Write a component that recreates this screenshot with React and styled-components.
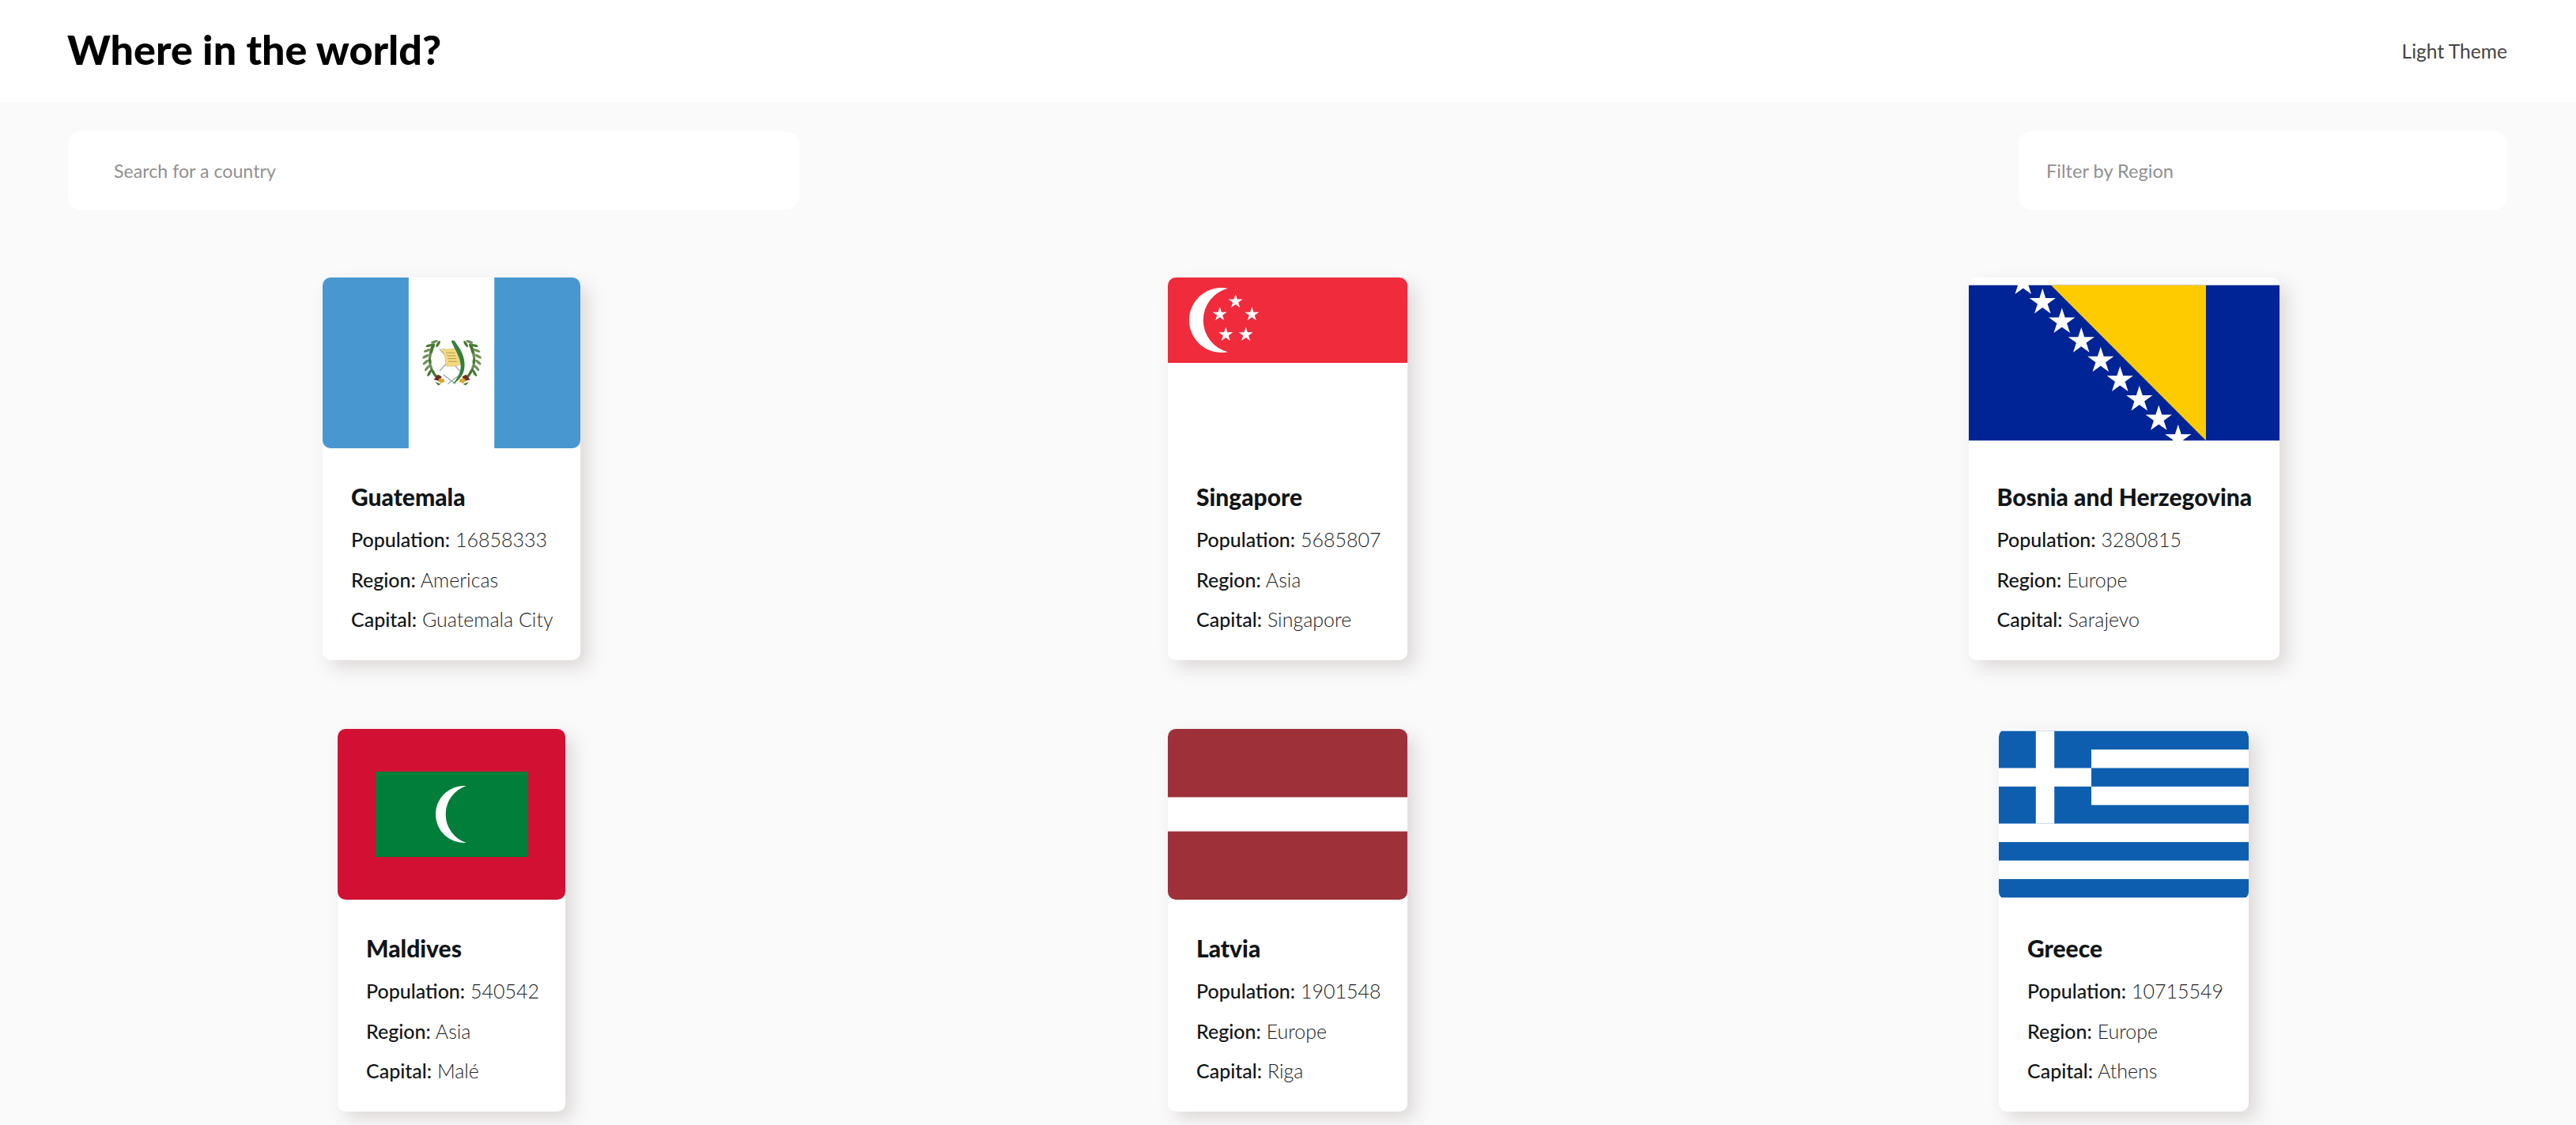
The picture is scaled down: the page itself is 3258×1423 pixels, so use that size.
import React from "react";
import styled, { createGlobalStyle } from "styled-components";

const GlobalStyle = createGlobalStyle`
  * {
    box-sizing: border-box;
  }
  body {
    margin: 0;
    background: #fafafa;
    color: #111517;
    font-family: "Lato", "Open Sans", sans-serif;
  }
`;

const Page = styled.div`
  width: 3258px;
  height: 1423px;
  overflow: hidden;
  background: #fafafa;
`;

const Header = styled.header`
  height: 129px;
  padding: 0 87px 0 85px;
  display: flex;
  align-items: center;
  justify-content: space-between;
  background: #fff;
`;

const Title = styled.h1`
  margin: 0 0 6px;
  font-size: 52px;
  font-weight: 900;
  color: #000;
`;

const ThemeToggle = styled.span`
  font-size: 24.6px;
  font-weight: 400;
  color: #444;
`;

const Main = styled.main`
  padding: 37px 87px 0 86px;
`;

const Toolbar = styled.div`
  display: flex;
  justify-content: space-between;
  margin-bottom: 86px;
`;

const SearchInput = styled.input`
  width: 925px;
  height: 99px;
  padding: 0 0 0 58px;
  border: none;
  border-radius: 16px;
  background: #fff;
  font: 400 23.2px "Lato", sans-serif;
  outline: none;
  &::placeholder {
    color: #909090;
    opacity: 1;
  }
`;

const FilterBox = styled.div`
  width: 618px;
  height: 99px;
  padding-left: 35px;
  display: flex;
  align-items: center;
  border-radius: 16px;
  background: #fff;
  font-size: 23.6px;
  color: #909090;
`;

const Grid = styled.section`
  display: grid;
  grid-template-columns: repeat(3, 970px);
  column-gap: 87.5px;
  row-gap: 87px;
  justify-items: center;
`;

const Card = styled.article`
  width: ${props => props.$width}px;
  height: 484px;
  border-radius: 10px;
  background: #fff;
  box-shadow: 10px 10px 22px rgba(90, 60, 60, 0.17);
`;

const Flag = styled.div`
  height: 216px;
  display: flex;
  align-items: center;
  justify-content: center;
  border-radius: 10px;
  overflow: hidden;
  background: #fff;
  svg {
    display: block;
    width: 100%;
    height: 100%;
  }
`;

const Info = styled.div`
  padding: 39px 0 0 36px;
`;

const Name = styled.h2`
  margin: 0 0 7px;
  font-size: 30px;
  line-height: 44px;
  font-weight: 900;
  white-space: nowrap;
`;

const Fact = styled.p`
  margin: 0;
  font-size: 25px;
  line-height: 50.5px;
  font-weight: 300;
  color: #1c1c1c;
  white-space: nowrap;
`;

const Label = styled.strong`
  font-weight: 500;
  color: #111517;
`;

const starPoints = (cx, cy, r) => {
  const points = [];
  for (let i = 0; i < 10; i++) {
    const radius = i % 2 === 0 ? r : r * 0.382;
    const angle = (Math.PI / 5) * i - Math.PI / 2;
    points.push(`${cx + radius * Math.cos(angle)},${cy + radius * Math.sin(angle)}`);
  }
  return points.join(" ");
};

const wreathLeaves = [
  [42, 23, -60], [37, 20, -20], [35, 27, -65], [30, 25, -15], [33, 33, -70],
  [27, 32, -20], [31, 40, -80], [25, 40, -30], [31, 47, -95], [25, 48, -40],
  [32, 54, -110], [27, 56, -50], [35, 61, -120], [30, 63, -60], [39, 67, -130]
];

const Wreath = () => (
  <g>
    <path d="M44 74C30 62 24 42 36 20" fill="none" stroke="#4a7230" strokeWidth="1.2" />
    {wreathLeaves.map(([x, y, rotate]) => (
      <ellipse
        key={`${x}-${y}`}
        cx={x}
        cy={y}
        rx="5"
        ry="1.8"
        fill={y % 2 ? "#44782e" : "#6b8f55"}
        transform={`rotate(${rotate} ${x} ${y})`}
      />
    ))}
    <path d="M36 72l6-7 5 3-3 6z" fill="#6f2c1d" />
    <path d="M44 70l6 1 1 4-5 2-4-3z" fill="#d9a92e" />
    <path d="M38 75l8 3-4 2z" fill="#44782e" />
  </g>
);

const Guatemala = () => (
  <svg viewBox="0 0 325 216" preserveAspectRatio="none">
    <rect width="325" height="216" fill="#fff" />
    <rect width="108.5" height="216" fill="#4997d0" />
    <rect x="216.5" width="108.5" height="216" fill="#4997d0" />
    <g transform="translate(107 63) scale(0.92)">
      <Wreath />
      <g transform="translate(122 0) scale(-1 1)">
        <Wreath />
      </g>
      <path d="M44 60L72 30M72 60L44 30M49 65L66 78M72 65L55 78" stroke="#a9abae" strokeWidth="1.6" fill="none" />
      <path d="M47 29c5 2 15 1 21-1 1 7 2 15 5 23-7 3-15 3-21 2 1-8-1-16-5-24z" fill="#f3d97f" stroke="#cdae58" strokeWidth=".6" />
      <path d="M53 35h12M54 39h12M55 43h12M56 47h12" stroke="#8f7a3e" strokeWidth=".7" />
      <path d="M60 19c2-2 5-1 6 2 6 8 14 20 12 35-1 10-9 19-16 22 5-6 11-14 11-25 0-11-8-22-13-34z" fill="#35803c" />
    </g>
  </svg>
);

const Singapore = () => (
  <svg viewBox="0 0 303 216" preserveAspectRatio="none">
    <rect width="303" height="216" fill="#fff" />
    <rect width="303" height="108" fill="#ef2b3c" />
    <path d="M76 13.8A41 41 0 1 0 76 94.2A41.5 41.5 0 0 1 76 13.8Z" fill="#fff" />
    {[[85.7, 30.4], [65.7, 46.6], [106.3, 46.6], [73.3, 72.3], [98.7, 72.3]].map(([x, y]) => (
      <polygon key={x} points={starPoints(x, y, 9.5)} fill="#fff" />
    ))}
  </svg>
);

const Bosnia = () => (
  <svg viewBox="0 0 393 196.5">
    <rect width="393" height="196.5" fill="#002395" />
    <polygon points="104,0 300,0 300,196.5" fill="#fecb00" />
    {[0, 1, 2, 3, 4, 5, 6, 7, 8].map(i => (
      <polygon key={i} points={starPoints(68.8 + 24.5 * i, -3 + 24.6 * i, 17.5)} fill="#fff" />
    ))}
  </svg>
);

const Maldives = () => (
  <svg viewBox="0 0 288 216" preserveAspectRatio="none">
    <rect width="288" height="216" fill="#d21034" />
    <rect x="48" y="54" width="193" height="108" fill="#007e3a" />
    <path d="M162.7 72A36.1 36.1 0 1 0 162.7 144A37.9 37.9 0 0 1 162.7 72Z" fill="#fff" />
  </svg>
);

const Latvia = () => (
  <svg viewBox="0 0 303 216" preserveAspectRatio="none">
    <rect width="303" height="216" fill="#9e3039" />
    <rect y="86.4" width="303" height="43.2" fill="#fff" />
  </svg>
);

const Greece = () => (
  <svg viewBox="0 0 27 18">
    <rect width="27" height="18" fill="#0d5eaf" />
    {[2, 6, 10, 14].map(y => (
      <rect key={y} x={y < 10 ? 10 : 0} y={y} width="27" height="2" fill="#fff" />
    ))}
    <rect x="4" width="2" height="10" fill="#fff" />
    <rect y="4" width="10" height="2" fill="#fff" />
  </svg>
);

const countries = [
  { name: "Guatemala", population: 16858333, region: "Americas", capital: "Guatemala City", width: 326, Flag: Guatemala },
  { name: "Singapore", population: 5685807, region: "Asia", capital: "Singapore", width: 303, Flag: Singapore },
  { name: "Bosnia and Herzegovina", population: 3280815, region: "Europe", capital: "Sarajevo", width: 393, Flag: Bosnia },
  { name: "Maldives", population: 540542, region: "Asia", capital: "Malé", width: 288, Flag: Maldives },
  { name: "Latvia", population: 1901548, region: "Europe", capital: "Riga", width: 303, Flag: Latvia },
  { name: "Greece", population: 10715549, region: "Europe", capital: "Athens", width: 316, Flag: Greece }
];

export default function App() {
  return (
    <Page>
      <GlobalStyle />
      <Header>
        <Title>Where in the world?</Title>
        <ThemeToggle>Light Theme</ThemeToggle>
      </Header>
      <Main>
        <Toolbar>
          <SearchInput placeholder="Search for a country" />
          <FilterBox>Filter by Region</FilterBox>
        </Toolbar>
        <Grid>
          {countries.map(country => (
            <Card key={country.name} $width={country.width}>
              <Flag>
                <country.Flag />
              </Flag>
              <Info>
                <Name>{country.name}</Name>
                <Fact>
                  <Label>Population:</Label> {country.population}
                </Fact>
                <Fact>
                  <Label>Region:</Label> {country.region}
                </Fact>
                <Fact>
                  <Label>Capital:</Label> {country.capital}
                </Fact>
              </Info>
            </Card>
          ))}
        </Grid>
      </Main>
    </Page>
  );
}
